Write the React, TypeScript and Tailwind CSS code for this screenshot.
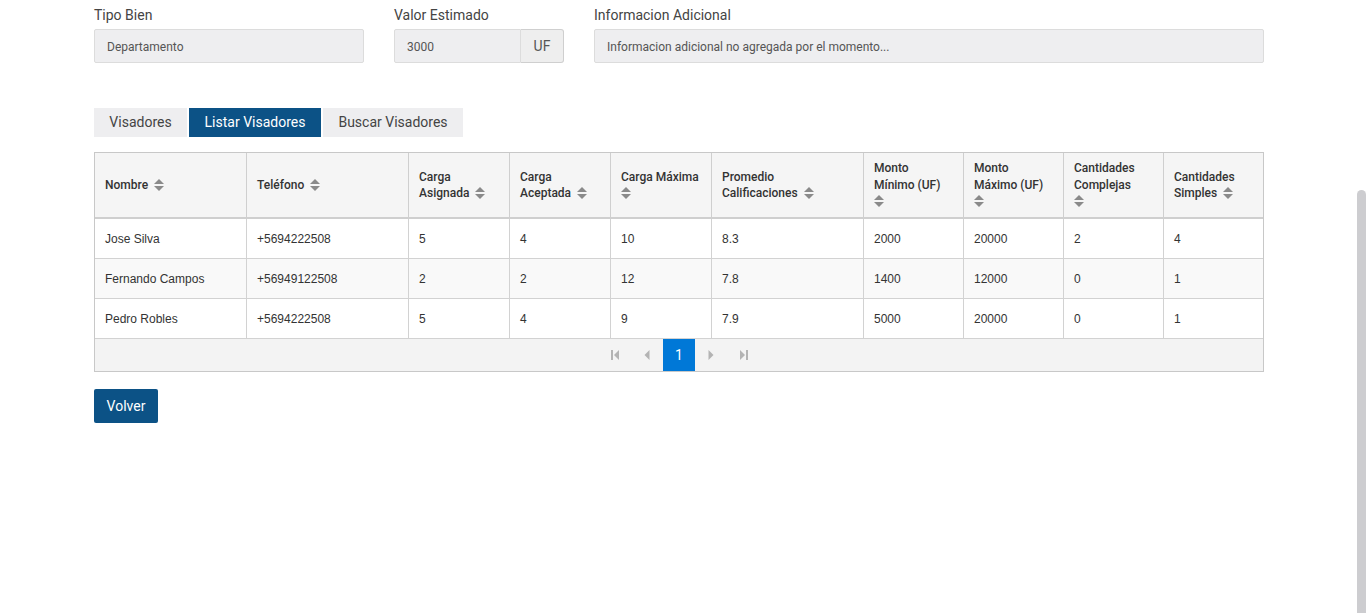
import React from "react";

type Row = {
  nombre: string;
  telefono: string;
  asignada: string;
  aceptada: string;
  maxima: string;
  promedio: string;
  minimo: string;
  maximo: string;
  complejas: string;
  simples: string;
};

const rows: Row[] = [
  { nombre: "Jose Silva", telefono: "+5694222508", asignada: "5", aceptada: "4", maxima: "10", promedio: "8.3", minimo: "2000", maximo: "20000", complejas: "2", simples: "4" },
  { nombre: "Fernando Campos", telefono: "+56949122508", asignada: "2", aceptada: "2", maxima: "12", promedio: "7.8", minimo: "1400", maximo: "12000", complejas: "0", simples: "1" },
  { nombre: "Pedro Robles", telefono: "+5694222508", asignada: "5", aceptada: "4", maxima: "9", promedio: "7.9", minimo: "5000", maximo: "20000", complejas: "0", simples: "1" },
];

function SortIcon() {
  return (
    <svg width="10" height="12" viewBox="0 0 10 12" className="inline-block align-[-2px]">
      <path d="M5 0 L10 5 L0 5 Z" fill="#8a8a8a" />
      <path d="M0 7 L10 7 L5 12 Z" fill="#8a8a8a" />
    </svg>
  );
}

// header cells: label lines + whether the icon sits inline or on its own line
const headers: { w: string; lines: string[]; iconOwnLine?: boolean }[] = [
  { w: "w-[152px]", lines: ["Nombre"] },
  { w: "w-[162px]", lines: ["Teléfono"] },
  { w: "w-[101px]", lines: ["Carga", "Asignada"] },
  { w: "w-[101px]", lines: ["Carga", "Aceptada"] },
  { w: "w-[101px]", lines: ["Carga Máxima"], iconOwnLine: true },
  { w: "w-[152px]", lines: ["Promedio", "Calificaciones"] },
  { w: "w-[100px]", lines: ["Monto", "Mínimo (UF)"], iconOwnLine: true },
  { w: "w-[100px]", lines: ["Monto", "Máximo (UF)"], iconOwnLine: true },
  { w: "w-[100px]", lines: ["Cantidades", "Complejas"], iconOwnLine: true },
  { w: "w-[100px]", lines: ["Cantidades", "Simples"] },
];

function PagerButton({ children }: { children: React.ReactNode }) {
  return <div className="flex h-[32px] w-[32px] items-center justify-center">{children}</div>;
}

export default function App() {
  const keys: (keyof Row)[] = ["nombre", "telefono", "asignada", "aceptada", "maxima", "promedio", "minimo", "maximo", "complejas", "simples"];

  return (
    <div className="relative min-h-[613px] bg-white pl-[94px] font-['Roboto',sans-serif] text-[#333]">
      {/* form fields */}
      <div className="flex gap-[30px] pt-[6px]">
        <div className="w-[270px]">
          <div className="mb-[5px] text-[14px] leading-[18px] text-[#444]">Tipo Bien</div>
          <div className="flex h-[34px] items-center rounded-[2px] border border-[#dcdcdc] bg-[#eeeef0] px-[12px] pt-[1px] text-[12px] text-[#555]">
            Departamento
          </div>
        </div>
        <div className="w-[170px]">
          <div className="mb-[5px] text-[14px] leading-[18px] text-[#444]">Valor Estimado</div>
          <div className="flex h-[34px]">
            <div className="flex flex-1 items-center rounded-l-[2px] border border-[#dcdcdc] bg-[#eeeef0] px-[12px] pt-[1px] text-[12px] text-[#555]">
              3000
            </div>
            <div className="flex w-[43px] items-center justify-center rounded-r-[3px] border border-l-0 border-[#cfcfcf] bg-[#eeeeee] text-[14px] text-[#555]">
              UF
            </div>
          </div>
        </div>
        <div className="w-[670px]">
          <div className="mb-[5px] text-[14px] leading-[18px] text-[#444]">Informacion Adicional</div>
          <div className="flex h-[34px] items-center rounded-[2px] border border-[#dcdcdc] bg-[#eeeef0] px-[12px] pt-[1px] text-[12px] text-[#555]">
            Informacion adicional no agregada por el momento...
          </div>
        </div>
      </div>

      {/* tabs */}
      <div className="mt-[45px] flex gap-[2px] text-[14px]">
        <div className="flex h-[29px] w-[93px] items-center justify-center bg-[#eeeef0] text-[#444]">Visadores</div>
        <div className="flex h-[29px] w-[132px] items-center justify-center bg-[#0c5286] text-white">Listar Visadores</div>
        <div className="flex h-[29px] w-[140px] items-center justify-center bg-[#eeeef0] text-[#444]">Buscar Visadores</div>
      </div>

      {/* table */}
      <div className="mt-[15px] w-[1170px] border border-[#c8c8c8]">
        <div className="flex h-[66px] border-b-2 border-[#cfcfcf] bg-[#f5f5f5]">
          {headers.map((h, i) => (
            <div
              key={i}
              className={`${h.w} flex shrink-0 flex-col justify-center px-[10px] text-[12px] font-medium leading-[16.5px] text-[#333] ${i < headers.length - 1 ? "border-r border-[#cfcfcf]" : ""}`}
            >
              {h.lines.map((l, j) => (
                <div key={j} className="whitespace-nowrap">
                  {l}
                  {!h.iconOwnLine && j === h.lines.length - 1 && (
                    <span className="ml-[6px]">
                      <SortIcon />
                    </span>
                  )}
                </div>
              ))}
              {h.iconOwnLine && (
                <div>
                  <SortIcon />
                </div>
              )}
            </div>
          ))}
        </div>
        {rows.map((r, ri) => (
          <div key={ri} className={`flex h-[40px] border-b border-[#d2d2d2] ${ri === 1 ? "bg-[#f9f9f9]" : "bg-white"}`}>
            {keys.map((k, i) => (
              <div
                key={k}
                className={`${headers[i].w} flex shrink-0 items-center px-[10px] font-['Liberation_Sans',Arial,sans-serif] text-[12px] text-[#333] ${i < keys.length - 1 ? "border-r border-[#d2d2d2]" : ""}`}
              >
                {r[k]}
              </div>
            ))}
          </div>
        ))}
        {/* pager */}
        <div className="flex h-[32px] items-center justify-center bg-[#f3f3f3]">
          <PagerButton>
            <svg width="9" height="10" viewBox="0 0 9 10">
              <rect x="0" y="0" width="2" height="10" fill="#b3b3b3" />
              <path d="M8 0 L3 5 L8 10 Z" fill="#b3b3b3" />
            </svg>
          </PagerButton>
          <PagerButton>
            <svg width="6" height="10" viewBox="0 0 6 10">
              <path d="M5.5 0 L0.5 5 L5.5 10 Z" fill="#b3b3b3" />
            </svg>
          </PagerButton>
          <div className="flex h-[32px] w-[32px] items-center justify-center bg-[#0078d7] text-[14px] text-white">1</div>
          <PagerButton>
            <svg width="6" height="10" viewBox="0 0 6 10">
              <path d="M0.5 0 L5.5 5 L0.5 10 Z" fill="#b3b3b3" />
            </svg>
          </PagerButton>
          <PagerButton>
            <svg width="9" height="10" viewBox="0 0 9 10">
              <path d="M1 0 L6 5 L1 10 Z" fill="#b3b3b3" />
              <rect x="7" y="0" width="2" height="10" fill="#b3b3b3" />
            </svg>
          </PagerButton>
        </div>
      </div>

      <button className="mt-[17px] flex h-[34px] w-[64px] items-center justify-center rounded-[2px] bg-[#0c5286] text-[14px] text-white">
        Volver
      </button>

      {/* overlay scrollbar thumb */}
      <div className="fixed right-0 top-[190px] h-[430px] w-[9px] rounded-t-[5px] bg-[#cdcdd0]" />
    </div>
  );
}
